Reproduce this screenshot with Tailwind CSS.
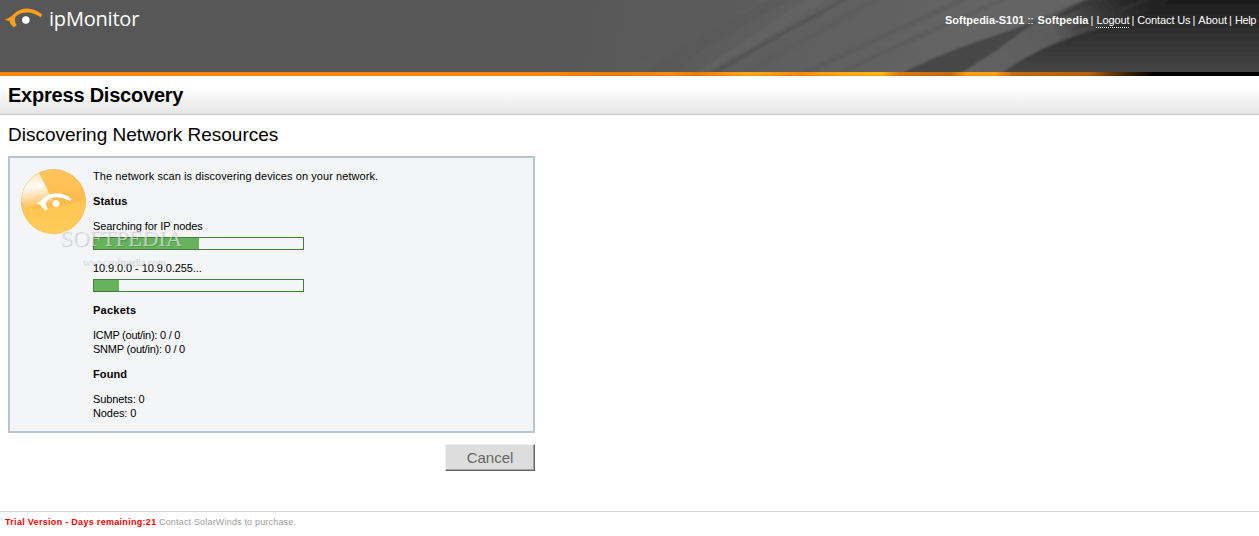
<!DOCTYPE html>
<html lang="en">

<head>
    <meta charset="UTF-8" />
    <meta name="viewport" content="width=device-width, initial-scale=1.0" />
    <title>ipMonitor - Express Discovery</title>
    <script src="https://cdn.jsdelivr.net/npm/@tailwindcss/browser@4"></script>
</head>

<body class="h-screen overflow-hidden bg-white font-['Liberation_Sans',Arial,sans-serif] text-[11px] leading-[14px] text-black">

    <!-- Header -->
    <header class="relative h-[76px] bg-[#575757]">
        <svg class="absolute inset-0 h-[76px] w-[1259px]" viewBox="0 0 1259 76" preserveAspectRatio="none">
            <defs>
                <linearGradient id="base" gradientUnits="userSpaceOnUse" x1="560" y1="0" x2="960" y2="60">
                    <stop offset="0" stop-color="#575757" />
                    <stop offset="1" stop-color="#646464" />
                </linearGradient>
                <linearGradient id="dark" x1="0" y1="0" x2="0" y2="1">
                    <stop offset="0" stop-color="#1b1b1b" />
                    <stop offset="1" stop-color="#4a4a4a" />
                </linearGradient>
                <linearGradient id="fade" gradientUnits="userSpaceOnUse" x1="960" y1="72" x2="1150" y2="0">
                    <stop offset="0" stop-color="#636363" />
                    <stop offset=".5" stop-color="#5c5c5c" />
                    <stop offset="1" stop-color="#2e2e2e" stop-opacity=".2" />
                </linearGradient>
                <linearGradient id="strip" gradientUnits="userSpaceOnUse" x1="0" y1="0" x2="1259" y2="0">
                    <stop offset="0" stop-color="#f6870d" />
                    <stop offset=".44" stop-color="#f6870d" />
                    <stop offset=".49" stop-color="#e97d08" />
                    <stop offset=".53" stop-color="#f58b12" />
                    <stop offset=".553" stop-color="#e97d08" />
                    <stop offset=".574" stop-color="#f98f12" />
                    <stop offset=".594" stop-color="#ffa51a" />
                    <stop offset=".635" stop-color="#f58a0e" />
                    <stop offset=".67" stop-color="#ffa817" />
                    <stop offset=".7" stop-color="#ffb716" />
                    <stop offset=".714" stop-color="#d9780c" />
                    <stop offset=".755" stop-color="#c46b10" />
                    <stop offset=".768" stop-color="#ff9d14" />
                    <stop offset=".79" stop-color="#ff9d14" />
                    <stop offset=".805" stop-color="#c46b10" />
                    <stop offset=".865" stop-color="#b5620a" />
                    <stop offset=".885" stop-color="#5e3508" />
                    <stop offset=".917" stop-color="#000" />
                    <stop offset="1" stop-color="#000" />
                </linearGradient>
                <filter id="soft" x="-5%" y="-5%" width="110%" height="110%">
                    <feGaussianBlur stdDeviation="1.3" />
                </filter>
            </defs>
            <rect x="560" width="699" height="72" fill="url(#base)" />
            <g filter="url(#soft)">
                <path d="M640 76 L690 40 L760 0 H720 L620 76Z" fill="#5a5a5a" opacity=".6" />
                <path d="M645 76 L690 42 L770 0 H790 L700 50 L670 76Z" fill="#555" opacity=".5" />
                <path d="M690 76 L740 45 L810 -5 H835 L760 42 L700 76Z" fill="#656565" opacity=".6" />
                <path d="M704 76 L755 47 L850 -5 H855 L762 47 L712 76Z" fill="#4e4e4e" opacity=".7" />
                <path d="M735 76 L880 -5 H889 L745 76Z" fill="#585858" opacity=".4" />
                <path d="M795 76 Q870 38 970 -5 H980 Q880 40 803 76Z" fill="#555" opacity=".4" />
                <path d="M830 76 Q890 45 1010 -5 H1018 Q900 46 838 76Z" fill="#555" opacity=".4" />
                <!-- dark right side with the light blades crossing it -->
                <path d="M893 78 Q930 58 980 41 Q1040 22 1094 -4 H1275 V82 H893Z" fill="url(#dark)" />
                <path d="M893 78 Q930 58 980 41 Q1030 24 1060 10 L1020 36 L950 82Z" fill="#464646" />
                <path d="M948 80 Q985 60 1016 36 Q1050 10 1096 -4 H1180 Q1120 24 1078 35 Q1030 50 990 82Z" fill="url(#fade)" />
                <path d="M1035 27 Q1065 9 1100 -3 L1112 -3 Q1070 13 1035 27Z" fill="#393939" opacity=".8" />
                <path d="M1068 31 Q1100 15 1145 -2 H1155 Q1110 18 1068 31Z" fill="#353535" opacity=".6" />
            </g>
            <rect y="72" width="1259" height="4" fill="url(#strip)" />
            <path d="M560 75.5H1140" stroke="#000" stroke-opacity=".07" />
        </svg>

        <div class="relative flex items-start justify-between">
            <div class="flex pl-[5px] pt-[8px]">
                <svg class="h-[22px] w-[38px]" viewBox="0 0 38 22">
                    <path d="M0 11.3 C4 10.5 6 8.500 8.500 6.200 C16-1.500 28-1.500 37.200 6.600 L35.800 9.300 C28 3.700 20 3 13 6.700 C9.500 8.500 8.700 12 11.700 17.600 L8.900 19.300 C6.800 17.700 4.800 15.300 4.600 13 C3 12.700 1.400 12.500 0 11.300Z" fill="#fb9d1d" />
                    <circle cx="20.800" cy="12" r="3.800" fill="#fff" />
                </svg>
                <span class="ml-[6px] whitespace-nowrap font-['Open_Sans',sans-serif] text-[20px] leading-[22px] tracking-[-0.2px] text-white">ipMonitor</span>
            </div>
            <nav class="flex gap-[3px] whitespace-nowrap pr-[3px] pt-[13px] text-white">
                <b>Softpedia-S101</b><span class="mr-px">::</span><b class="tracking-[0.1px]">Softpedia</b><span class="-ml-px">|</span>
                <a class="h-[15px] border-b border-dotted border-white tracking-[-0.1px]">Logout</a><span class="-ml-px">|</span>
                <a class="tracking-[-0.12px]">Contact Us</a><span class="-ml-px">|</span>
                <a>About</a><span class="-ml-px">|</span>
                <a class="tracking-[-0.4px]">Help</a>
            </nav>
        </div>
    </header>

    <!-- Page title -->
    <div class="h-[39px] border-b border-[#c8c8c8] bg-linear-to-b from-white from-30% to-[#e6e6e6] pl-2">
        <h1 class="text-[20px] font-bold leading-[38px] tracking-[-0.22px]">Express Discovery</h1>
    </div>

    <main class="w-[535px] pl-2">
        <h2 class="h-[41px] text-[19px] leading-[39px]">Discovering Network Resources</h2>

        <section class="relative flex h-[277px] border-2 border-[#b8c5d1] bg-[#f3f5f7] pl-[10px] pt-[10px]">
            <svg class="mr-[6px] h-[67px] w-[67px] shrink-0" viewBox="0 0 67 67">
                <defs>
                    <linearGradient id="disc" x1="0" y1="0" x2="0" y2="1">
                        <stop offset="0" stop-color="#ffc75c" />
                        <stop offset=".5" stop-color="#ffb94b" />
                        <stop offset="1" stop-color="#ffd05c" />
                    </linearGradient>
                    <linearGradient id="beam" gradientUnits="userSpaceOnUse" x1="16" y1="3" x2="22" y2="40">
                        <stop offset="0" stop-color="#fff" stop-opacity=".55" />
                        <stop offset=".4" stop-color="#fff" stop-opacity=".95" />
                        <stop offset="1" stop-color="#fff" stop-opacity="0" />
                    </linearGradient>
                </defs>
                <circle cx="33.500" cy="33.500" r="32" fill="url(#disc)" stroke="#eebd69" />
                <path d="M1.500 38 Q34 46 65.500 30 A32 32 0 0 1 1.500 38Z" fill="#ffcb58" opacity=".65" />
                <path d="M33.500 33.500 L19 5 A32 32 0 0 0 1.500 33.500 L5 40 Z" fill="url(#beam)" />
                <path d="M16.500 35.500 C20 34 21 32.500 23 30.500 C31 23.500 43 23.500 51.500 31 L50 33.300 C42 28.500 35 28.500 29.500 31 C25.500 33 25 36 28 41 L25.500 42.300 C22.500 40.500 21 38.500 20.500 36.800 Z" fill="#fff" />
                <circle cx="36" cy="35.500" r="3.500" fill="#fff" />
            </svg>

            <div class="flex flex-col pt-px">
                <p class="tracking-[0.07px]">The network scan is discovering devices on your network.</p>
                <h3 class="mt-[11px] font-bold tracking-[0.15px]">Status</h3>
                <p class="mt-[11px] tracking-[-0.09px]">Searching for IP nodes</p>
                <div class="mt-[4px] h-[13px] w-[211px] border border-[#437c3b]">
                    <div class="h-full bg-[#66b25d]" style="width: 105px"></div>
                </div>
                <p class="mt-[11px] tracking-[-0.08px]">10.9.0.0 - 10.9.0.255...</p>
                <div class="mt-[4px] h-[13px] w-[211px] border border-[#437c3b]">
                    <div class="h-full bg-[#66b25d]" style="width: 25px"></div>
                </div>
                <h3 class="mt-[11px] font-bold tracking-[0.25px]">Packets</h3>
                <p class="mt-[11px] tracking-[-0.25px]">ICMP (out/in): 0 / 0</p>
                <p class="tracking-[-0.22px]">SNMP (out/in): 0 / 0</p>
                <h3 class="mt-[11px] font-bold tracking-[0.1px]">Found</h3>
                <p class="mt-[11px] tracking-[-0.1px]">Subnets: 0</p>
                <p class="tracking-[-0.1px]">Nodes: 0</p>
            </div>

            <!-- Watermark -->
            <div class="absolute left-[50px] top-[69px] whitespace-nowrap font-['Liberation_Serif',serif] text-[23px] leading-[24px] tracking-[-0.2px] text-[#f3f5f7]/60 [text-shadow:1px_1px_1px_rgb(0_0_0/0.18)]">SOFTPEDIA</div>
            <div class="absolute left-[72px] top-[96px] whitespace-nowrap font-['Liberation_Serif',serif] text-[11px] leading-[14px] tracking-[-0.3px] text-[#f3f5f7]/60 [text-shadow:1px_1px_1px_rgb(0_0_0/0.2)]">www.softpedia.com</div>
        </section>

        <div class="mt-[11px] flex justify-end">
            <button class="h-[27px] w-[90px] border border-b-[#696969] border-l-[#f0f0f0] border-r-[#696969] border-t-[#f0f0f0] bg-[#dddddd] text-[15px] leading-[24px] text-[#666666] shadow-[inset_-1px_-1px_0_#a0a0a0]">Cancel</button>
        </div>
    </main>

    <footer class="mt-[40px] border-t border-[#d8d8d8] pl-[5px] pt-[3px] text-[9px] text-[#9c9c9c]">
        <b class="tracking-[0.3px] text-[#ff0000]">Trial Version - Days remaining:21</b> <span class="tracking-[0.18px]">Contact SolarWinds to purchase.</span>
    </footer>

</body>

</html>
